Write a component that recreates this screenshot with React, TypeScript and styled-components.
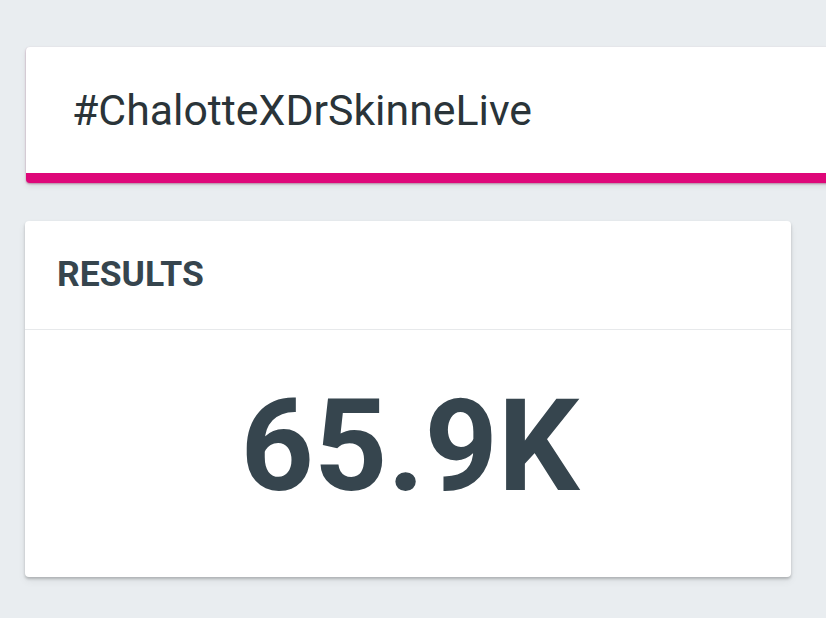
import React from "react";
import styled, { createGlobalStyle } from "styled-components";

const Global = createGlobalStyle`
  html, body { margin: 0; padding: 0; background: #e9edf0; }
  body { font-family: Roboto, "Noto Sans", "Liberation Sans", sans-serif; }
`;

const Page = styled.div`
  width: 826px;
  height: 618px;
  overflow: hidden;
  box-sizing: border-box;
  padding: 47px 0 0 25px;
  display: flex;
  flex-direction: column;
  gap: 38px;
  background: #e9edf0;
`;

const SearchCard = styled.div`
  margin-left: 1px;
  width: 860px;
  height: 136px;
  box-sizing: border-box;
  background: #ffffff;
  border-radius: 4px 0 0 4px;
  border-bottom: 10px solid #de0779;
  box-shadow: 0 1px 2px rgba(0, 0, 0, 0.18), 0 3px 6px rgba(0, 0, 0, 0.08),
    0 1px 2px rgba(222, 7, 121, 0.25);
  display: flex;
  align-items: center;
  padding: 0 0 0 46px;
`;

const Query = styled.div`
  font-size: 42.8px;
  line-height: 1;
  color: #2a3439;
  font-weight: 400;
`;

const ResultsCard = styled.div`
  width: 766px;
  height: 356px;
  background: #ffffff;
  border-radius: 4px;
  box-shadow: 0 2px 3px rgba(0, 0, 0, 0.22), 0 4px 8px rgba(0, 0, 0, 0.06);
  display: flex;
  flex-direction: column;
`;

const Header = styled.div`
  height: 109px;
  box-sizing: border-box;
  border-bottom: 1px solid #e7e9eb;
  display: flex;
  align-items: center;
  padding-left: 32px;
`;

const HeaderTitle = styled.div`
  font-size: 35.5px;
  font-weight: 700;
  line-height: 1;
  color: #36454e;
`;

const Body = styled.div`
  flex: 1;
  display: flex;
  align-items: center;
  justify-content: center;
  padding-bottom: 16px;
  padding-left: 4px;
`;

const BigNumber = styled.div`
  font-size: 128px;
  font-weight: 700;
  line-height: 1;
  color: #36454e;
`;

export default function App() {
  return (
    <>
      <Global />
      <Page>
        <SearchCard>
          <Query>#ChalotteXDrSkinneLive</Query>
        </SearchCard>
        <ResultsCard>
          <Header>
            <HeaderTitle>RESULTS</HeaderTitle>
          </Header>
          <Body>
            <BigNumber>65.9K</BigNumber>
          </Body>
        </ResultsCard>
      </Page>
    </>
  );
}
